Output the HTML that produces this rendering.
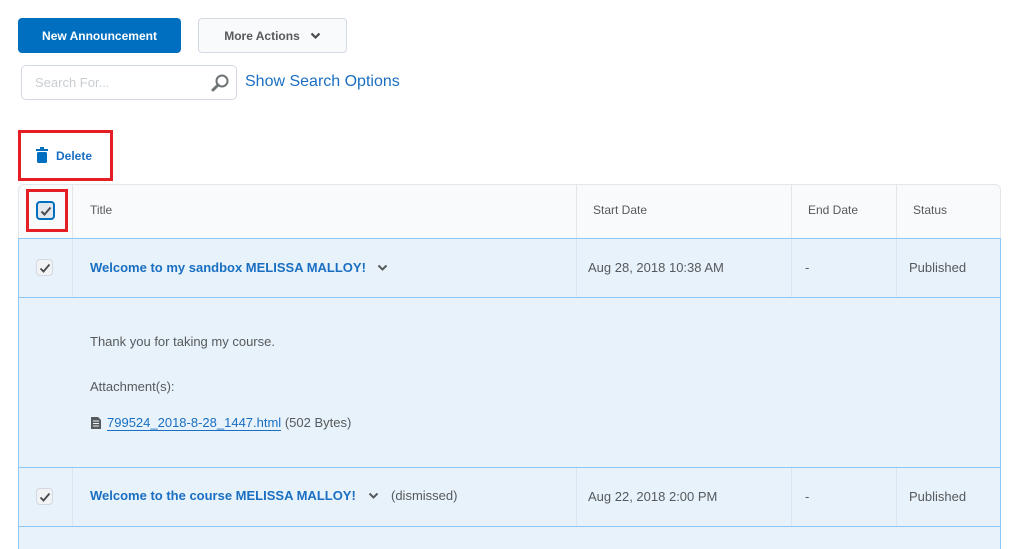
<!DOCTYPE html>
<html><head><style>
body{margin:0;width:1024px;height:549px;background:#fff;font-family:"Liberation Sans",sans-serif;position:relative;overflow:hidden;color:#565a5c}
.a{position:absolute}
.btn{position:absolute;border-radius:4px;font-size:12px;font-weight:bold;display:flex;align-items:center;justify-content:center;box-sizing:border-box}
.cb{position:absolute;width:17px;height:17px;border:1px solid #d3d9e3;border-radius:4px;background:#f1f3f5;box-sizing:border-box}
.cb svg{position:absolute;left:2px;top:2px}
.t{font-size:13px;position:absolute}
.lk{color:#1a6fc2;font-weight:bold;font-size:13px;position:absolute}
.vl{position:absolute;width:1px;background:#d9e6f2}
.hl{position:absolute;left:18px;width:983px;height:1px;background:#8cc7f5}
</style></head><body>
<div class="btn" style="left:18px;top:18px;width:163px;height:35px;background:#006fbf;color:#fff">New Announcement</div>
<div class="btn" style="left:198px;top:18px;width:149px;height:35px;background:#f9fafb;border:1px solid #d3d9e3;color:#565a5c">More Actions&nbsp;&nbsp;&nbsp;<svg width="11" height="8" viewBox="0 0 11 8"><path d="M1.5 1.5l4 4 4-4" stroke="#494c4e" stroke-width="2.2" fill="none"/></svg></div>
<div class="a" style="left:21px;top:65px;width:216px;height:35px;border:1px solid #d3d9e3;border-radius:5px;box-sizing:border-box"></div>
<div class="t" style="left:35px;top:75px;color:#c9ced3;font-size:13px">Search For...</div>
<svg class="a" style="left:210px;top:73px" width="20" height="20" viewBox="0 0 20 20"><circle cx="12" cy="8" r="5.5" stroke="#6e7376" stroke-width="2" fill="none"/><path d="M8 12l-5 5" stroke="#6e7376" stroke-width="3" stroke-linecap="round"/></svg>
<div class="a" style="left:245px;top:73px;color:#1a6fc2;font-size:16px">Show Search Options</div>
<div class="a" style="left:18px;top:130px;width:95px;height:51px;border:3px solid #e31e24;box-sizing:border-box"></div>
<svg class="a" style="left:36px;top:147px" width="12" height="16" viewBox="0 0 12 16"><rect x="0" y="2" width="12" height="2" fill="#006fbf"/><rect x="4" y="0" width="4" height="2" fill="#006fbf"/><rect x="1" y="5" width="10" height="11" rx="1.5" fill="#006fbf"/></svg>
<div class="a" style="left:56px;top:149px;color:#1a6fc2;font-weight:bold;font-size:12px">Delete</div>
<!-- table -->
<div class="a" style="left:18px;top:184px;width:983px;height:54px;background:#f9fafb;border:1px solid #e3e7eb;border-bottom:none;border-radius:6px 6px 0 0;box-sizing:border-box"></div>
<div class="a" style="left:18px;top:238px;width:983px;height:311px;background:#e8f2fa;border-left:1px solid #8cc7f5;border-right:1px solid #8cc7f5;box-sizing:border-box"></div>
<div class="hl" style="top:238px"></div><div class="hl" style="top:297px"></div><div class="hl" style="top:467px"></div><div class="hl" style="top:526px"></div>
<div class="vl" style="left:72px;top:184px;height:54px;background:#e3e7eb"></div>
<div class="vl" style="left:576px;top:184px;height:54px;background:#e3e7eb"></div>
<div class="vl" style="left:791px;top:184px;height:54px;background:#e3e7eb"></div>
<div class="vl" style="left:896px;top:184px;height:54px;background:#e3e7eb"></div>
<div class="vl" style="left:72px;top:239px;height:58px"></div><div class="vl" style="left:576px;top:239px;height:58px"></div><div class="vl" style="left:791px;top:239px;height:58px"></div><div class="vl" style="left:896px;top:239px;height:58px"></div>
<div class="vl" style="left:72px;top:468px;height:58px"></div><div class="vl" style="left:576px;top:468px;height:58px"></div><div class="vl" style="left:791px;top:468px;height:58px"></div><div class="vl" style="left:896px;top:468px;height:58px"></div>
<div class="a" style="left:26px;top:189px;width:42px;height:43px;border:3px solid #e31e24;box-sizing:border-box"></div>
<div class="cb" style="left:36px;top:201px;width:19px;height:19px;border:2px solid #006fbf;background:#e3e7ee"><svg width="12" height="12" viewBox="0 0 12 12"><path d="M1.5 6.5l3 3 6-7" stroke="#494c4e" stroke-width="2" fill="none"/></svg></div>
<div class="t" style="left:90px;top:203px;font-size:12px">Title</div>
<div class="t" style="left:593px;top:203px;font-size:12px">Start Date</div>
<div class="t" style="left:808px;top:203px;font-size:12px">End Date</div>
<div class="t" style="left:913px;top:203px;font-size:12px">Status</div>
<div class="cb" style="left:36px;top:259px"><svg width="12" height="12" viewBox="0 0 12 12"><path d="M1.5 6.5l3 3 6-7" stroke="#494c4e" stroke-width="1.8" fill="none"/></svg></div>
<div class="lk" style="left:90px;top:260px">Welcome to my sandbox MELISSA MALLOY!</div>
<svg class="a" style="left:377px;top:264px" width="11" height="8" viewBox="0 0 11 8"><path d="M1.5 1.5l4 4 4-4" stroke="#565a5c" stroke-width="2" fill="none"/></svg>
<div class="t" style="left:588px;top:260px">Aug 28, 2018 10:38 AM</div>
<div class="t" style="left:805px;top:260px">-</div>
<div class="t" style="left:909px;top:260px">Published</div>
<div class="t" style="left:90px;top:334px">Thank you for taking my course.</div>
<div class="t" style="left:90px;top:379px">Attachment(s):</div>
<svg class="a" style="left:91px;top:417px" width="10" height="12" viewBox="0 0 10 12"><path d="M0 0h7l3 3v9H0z" fill="#565a5c"/><path d="M2 4h6M2 6.5h6M2 9h6" stroke="#e8f2fa" stroke-width="1"/></svg>
<div class="t" style="left:107px;top:415px"><span style="border-bottom:1px solid #1a6fc2;color:#1a6fc2">799524_2018-8-28_1447.html</span> (502 Bytes)</div>
<div class="cb" style="left:36px;top:488px"><svg width="12" height="12" viewBox="0 0 12 12"><path d="M1.5 6.5l3 3 6-7" stroke="#494c4e" stroke-width="1.8" fill="none"/></svg></div>
<div class="lk" style="left:90px;top:488px">Welcome to the course MELISSA MALLOY!</div>
<svg class="a" style="left:368px;top:492px" width="11" height="8" viewBox="0 0 11 8"><path d="M1.5 1.5l4 4 4-4" stroke="#565a5c" stroke-width="2" fill="none"/></svg>
<div class="t" style="left:391px;top:488px">(dismissed)</div>
<div class="t" style="left:588px;top:489px">Aug 22, 2018 2:00 PM</div>
<div class="t" style="left:805px;top:489px">-</div>
<div class="t" style="left:909px;top:489px">Published</div>
</body></html>
